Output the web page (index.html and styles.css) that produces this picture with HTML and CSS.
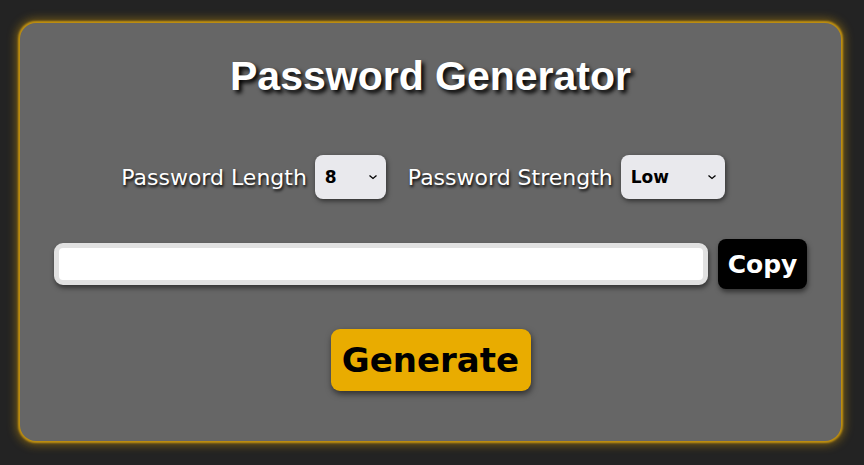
FILE: index.html
```html
<!DOCTYPE html>
<html>
<head>
<meta charset="utf-8">
<link rel="stylesheet" href="styles.css">
</head>
<body>
<div class="card">
  <h1 class="title">Password Generator</h1>
  <div class="options">
    <label class="label">Password Length</label>
    <div class="select sel-len"><span>8</span><svg class="chev" viewBox="0 0 10 6"><path d="M1.5 1.5 L5 4.5 L8.5 1.5" fill="none" stroke="#000" stroke-width="1.3"/></svg></div>
    <label class="label label-2">Password Strength</label>
    <div class="select sel-str"><span>Low</span><svg class="chev" viewBox="0 0 10 6"><path d="M1.5 1.5 L5 4.5 L8.5 1.5" fill="none" stroke="#000" stroke-width="1.3"/></svg></div>
  </div>
  <div class="output">
    <div class="field"></div>
    <button class="copy">Copy</button>
  </div>
  <button class="generate">Generate</button>
</div>
</body>
</html>
```
FILE: styles.css
```css
html, body { margin: 0; padding: 0; }
body {
  background: #232323;
  width: 864px;
  height: 465px;
  overflow: hidden;
  padding-top: 23px;
  padding-left: 20px;
  box-sizing: border-box;
}
.card {
  width: 821px;
  height: 418px;
  box-sizing: border-box;
  background: #666666;
  border-radius: 16px;
  box-shadow: 0 0 2px 2px #c09010, 0 0 10px 4px rgba(210,155,10,0.45);
  display: flex;
  flex-direction: column;
  align-items: center;
  padding-top: 29px;
}
.title {
  margin: 0;
  font-family: "Liberation Sans", Arial, sans-serif;
  font-weight: bold;
  font-size: 41px;
  line-height: 48px;
  color: #fff;
  text-shadow: 3px 3px 4px #000;
}
.options {
  margin-top: 55px;
  display: flex;
  align-items: center;
  margin-left: -15px;
}
.label {
  font-family: "DejaVu Sans", Verdana, sans-serif;
  font-size: 22px;
  color: #fff;
  text-shadow: 1px 2px 3px #000;
}
.label-2 { margin-left: 22px; }
.select {
  margin-left: 8px;
  height: 44px;
  box-sizing: border-box;
  background: #e9e9ed;
  border-radius: 8px;
  box-shadow: 1px 2px 5px rgba(0,0,0,0.55);
  display: flex;
  align-items: center;
  justify-content: space-between;
  padding: 0 8px 0 10px;
  font-family: "DejaVu Sans", Verdana, sans-serif;
  font-weight: bold;
  font-size: 17px;
  color: #000;
}
.sel-len { width: 71px; }
.sel-str { width: 104px; }
.chev { width: 10px; height: 6px; }
.output {
  margin-top: 40px;
  display: flex;
  align-items: center;
  gap: 10px;
}
.field {
  width: 654px;
  height: 42px;
  box-sizing: border-box;
  background: #fff;
  border: 5px solid #e1e1e1;
  border-radius: 9px;
  box-shadow: 1px 3px 5px rgba(0,0,0,0.5);
}
.copy {
  width: 89px;
  height: 50px;
  border: none;
  background: #000;
  color: #fff;
  border-radius: 8px;
  font-family: "DejaVu Sans", Verdana, sans-serif;
  font-weight: bold;
  font-size: 25px;
  padding: 0;
  box-shadow: 1px 3px 5px rgba(0,0,0,0.5);
}
.generate {
  margin-top: 40px;
  width: 200px;
  height: 62px;
  border: none;
  background: #e9ac00;
  color: #000;
  border-radius: 9px;
  font-family: "DejaVu Sans", Verdana, sans-serif;
  font-weight: bold;
  font-size: 34px;
  padding: 0;
  box-shadow: 1px 3px 6px rgba(0,0,0,0.55);
}
```
